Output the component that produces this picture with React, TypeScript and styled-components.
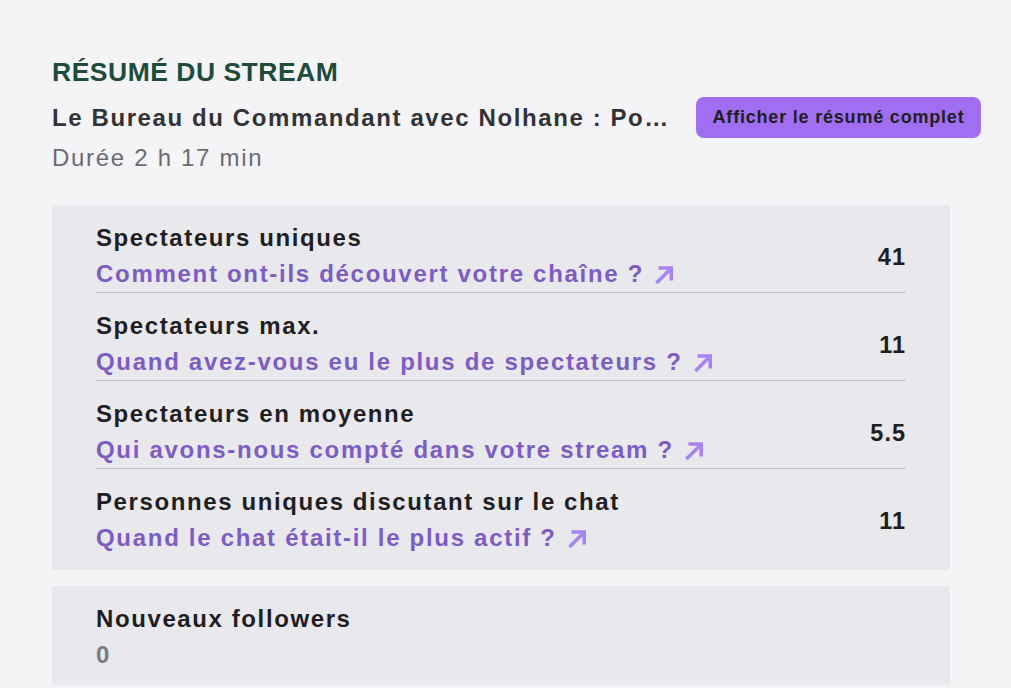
import React from 'react';
import styled, { createGlobalStyle } from 'styled-components';

const GlobalStyle = createGlobalStyle`
  html, body {
    margin: 0;
    padding: 0;
    background: #f4f4f6;
    font-family: "Liberation Sans", Arial, Helvetica, sans-serif;
  }
`;

const Page = styled.div`
  padding: 56px 30px 0 52px;
  width: 1011px;
  height: 688px;
  box-sizing: border-box;
  overflow: hidden;
`;

const Heading = styled.h2`
  margin: 0;
  font-size: 26.5px;
  line-height: 32px;
  font-weight: 700;
  color: #1f4c3a;
  letter-spacing: 0.5px;
`;

const TitleRow = styled.div`
  display: flex;
  align-items: center;
  justify-content: space-between;
  gap: 14px;
  margin-top: 9px;
`;

const StreamTitle = styled.div`
  min-width: 0;
  font-size: 24px;
  line-height: 30px;
  font-weight: 700;
  letter-spacing: 1.6px;
  color: #323237;
  white-space: nowrap;
  overflow: hidden;
  text-overflow: ellipsis;
`;

const FullButton = styled.button`
  flex: none;
  width: 285px;
  height: 41px;
  padding: 0;
  border: none;
  border-radius: 8px;
  background: #a06ef0;
  color: #1f1f23;
  font-family: inherit;
  font-size: 18px;
  font-weight: 700;
  letter-spacing: 0.8px;
  cursor: pointer;
`;

const Duration = styled.div`
  margin-top: 5px;
  font-size: 24px;
  line-height: 30px;
  letter-spacing: 1.7px;
  color: #6b6b73;
`;

const Card = styled.section<{ $top: number; $bottom: number }>`
  margin: ${({ $top }) => $top}px 31px 0 0;
  background: #e9e8ed;
  padding: 0 44px ${({ $bottom }) => $bottom}px;
  border-radius: 2px;
`;

const StatRow = styled.div<{ $last?: boolean }>`
  display: flex;
  align-items: center;
  justify-content: space-between;
  padding-top: 18px;
  border-bottom: ${({ $last }) => ($last ? 'none' : '1px solid #c3c2c8')};
`;

const StatText = styled.div`
  display: flex;
  flex-direction: column;
`;

const Label = styled.div`
  font-size: 24px;
  line-height: 30px;
  font-weight: 700;
  letter-spacing: 1.6px;
  color: #1f1f23;
`;

const InsightLink = styled.a`
  display: flex;
  align-items: center;
  gap: 10px;
  margin-top: 3px;
  font-size: 24px;
  line-height: 36px;
  font-weight: 700;
  letter-spacing: 1.7px;
  color: #7d5dc2;
  text-decoration: none;
  cursor: pointer;
`;

const Value = styled.div`
  font-size: 23.5px;
  font-weight: 700;
  letter-spacing: 1px;
  color: #1f1f23;
`;

const PlainValue = styled.div`
  margin-top: 3px;
  font-size: 24px;
  line-height: 36px;
  font-weight: 700;
  color: #7a7a80;
`;

const ArrowIcon = () => (
  <svg width="21" height="21" viewBox="0 0 20 20" fill="none">
    <path d="M3.5 17 L15.5 5" stroke="#a784f2" strokeWidth="3.4" strokeLinecap="square" />
    <path d="M6 3.8 H16.4 V14" stroke="#a784f2" strokeWidth="3.4" strokeLinecap="square" />
  </svg>
);

const stats = [
  { label: 'Spectateurs uniques', link: 'Comment ont-ils découvert votre chaîne ?', value: '41' },
  { label: 'Spectateurs max.', link: 'Quand avez-vous eu le plus de spectateurs ?', value: '11' },
  { label: 'Spectateurs en moyenne', link: 'Qui avons-nous compté dans votre stream ?', value: '5.5' },
  { label: 'Personnes uniques discutant sur le chat', link: 'Quand le chat était-il le plus actif ?', value: '11' },
];

const App: React.FC = () => (
  <>
    <GlobalStyle />
    <Page>
      <Heading>RÉSUMÉ DU STREAM</Heading>
      <TitleRow>
        <StreamTitle>Le Bureau du Commandant avec Nolhane : Po…</StreamTitle>
        <FullButton>Afficher le résumé complet</FullButton>
      </TitleRow>
      <Duration>Durée 2 h 17 min</Duration>

      <Card $top={32} $bottom={14}>
        {stats.map((s, i) => (
          <StatRow key={s.label} $last={i === stats.length - 1}>
            <StatText>
              <Label>{s.label}</Label>
              <InsightLink>
                {s.link}
                <ArrowIcon />
              </InsightLink>
            </StatText>
            <Value>{s.value}</Value>
          </StatRow>
        ))}
      </Card>

      <Card $top={16} $bottom={12}>
        <StatRow $last>
          <StatText>
            <Label>Nouveaux followers</Label>
            <PlainValue>0</PlainValue>
          </StatText>
        </StatRow>
      </Card>
    </Page>
  </>
);

export default App;
